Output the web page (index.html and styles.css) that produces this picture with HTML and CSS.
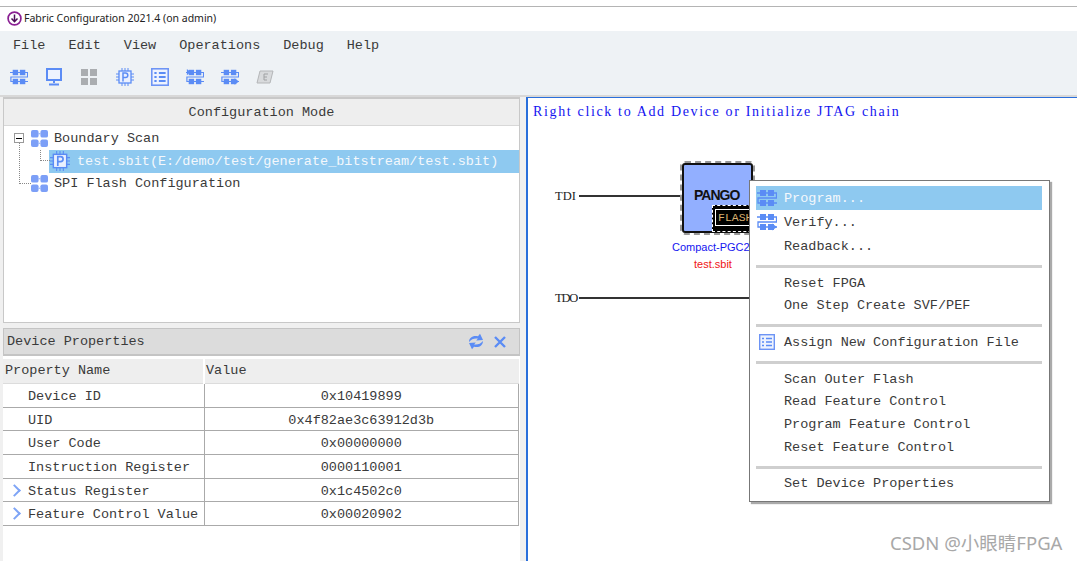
FILE: index.html
```html
<!DOCTYPE html>
<html lang="en">
<head>
<meta charset="utf-8">
<title>Fabric Configuration 2021.4</title>
<link rel="stylesheet" href="styles.css">
</head>
<body>
<svg class="defs" width="0" height="0">
  <defs>
    <symbol id="i-scan" viewBox="0 0 20 18">
      <g fill="#5b8cf5"><rect x="3" y="1" width="6" height="6"/><rect x="11" y="1" width="6" height="6"/><rect x="3" y="11" width="6" height="6"/><rect x="11" y="11" width="6" height="6"/></g>
      <path d="M0 4h19.500V9H1v5h19" stroke="#5b8cf5" fill="none" stroke-width="1.300"/>
    </symbol>
    <symbol id="i-tree" viewBox="0 0 20 18">
      <g fill="#7c9ff7"><rect x="1" y="0" width="8" height="8" rx="2"/><rect x="11" y="0" width="8" height="8" rx="2"/><rect x="1" y="10" width="8" height="8" rx="2"/><rect x="11" y="10" width="8" height="8" rx="2"/></g>
      <path d="M9 4h2M9 14h2" stroke="#7c9ff7"/>
    </symbol>
    <symbol id="i-chip" viewBox="0 0 18 18">
      <rect x="3" y="3" width="12" height="12" fill="#eaf0fe" stroke="#5b8cf5" stroke-width="1.300"/>
      <path d="M6 0v3M9 0v3M12 0v3M6 15v3M9 15v3M12 15v3M0 6h3M0 9h3M0 12h3M15 6h3M15 9h3M15 12h3" stroke="#5b8cf5"/>
      <path d="M7 13.500V5h2.500a2.300 2.300 0 0 1 0 4.600H7" fill="none" stroke="#5b8cf5" stroke-width="1.500"/>
    </symbol>
    <symbol id="i-list" viewBox="0 0 16 16">
      <rect x=".7" y=".7" width="14.600" height="14.600" fill="#eef3fe" stroke="#6d94f5" stroke-width="1.400"/>
      <path d="M3 4.500h2M3 8h2M3 11.500h2M7 4.500h6M7 8h6M7 11.500h6" stroke="#5b8cf5" stroke-width="1.700"/>
    </symbol>
  </defs>
</svg>
<div class="window">
  <header class="titlebar">
    <svg class="app-icon" width="15" height="15" viewBox="0 0 15 15"><circle cx="7.500" cy="7.500" r="6.400" fill="#fff" stroke="#8a1f93" stroke-width="1.700"/><path d="M7.500 3.500v7M4.500 7.500l3 3.200 3-3.200" fill="none" stroke="#4c0c58" stroke-width="1.500"/></svg>
    <span>Fabric Configuration 2021.4 (on admin)</span>
  </header>
  <nav class="menubar">
    <span class="menu-item">File</span>
    <span class="menu-item">Edit</span>
    <span class="menu-item">View</span>
    <span class="menu-item">Operations</span>
    <span class="menu-item">Debug</span>
    <span class="menu-item">Help</span>
  </nav>
  <div class="toolbar">
    <svg class="tool" viewBox="0 0 20 18"><use href="#i-scan"/></svg>
    <svg class="tool" viewBox="0 0 18 18"><rect x="2" y="1" width="14" height="11" fill="#eef3fe" stroke="#5b8cf5" stroke-width="2"/><path d="M9 12v3M4 16.500h10" stroke="#5b8cf5" stroke-width="2"/></svg>
    <svg class="tool" viewBox="0 0 18 18"><g fill="#aaadb0"><rect x="1" y="1" width="7" height="7"/><rect x="10" y="1" width="7" height="7"/><rect x="1" y="10" width="7" height="7"/><rect x="10" y="10" width="7" height="7"/></g></svg>
    <svg class="tool" viewBox="0 0 18 18"><use href="#i-chip"/></svg>
    <svg class="tool" viewBox="0 0 16 16"><use href="#i-list"/></svg>
    <svg class="tool" viewBox="0 0 20 18"><use href="#i-scan"/><path d="M1 0l4 3.500L1 7z" fill="#5b8cf5"/></svg>
    <svg class="tool" viewBox="0 0 20 18"><use href="#i-scan"/><path d="M15 10.500l5 3.500-5 3.500z" fill="#5b8cf5"/></svg>
    <svg class="tool" viewBox="0 0 18 18"><path d="M4 3h13l-3 12H1z" fill="#d8dadc" stroke="#b4b6b8"/><path d="M8 6h4M8 9h3M8 12h3M8 6v6" stroke="#a0a2a4"/></svg>
  </div>
  <main class="workspace">
    <section class="left">
      <div class="mode-panel">
        <div class="panel-head">Configuration Mode</div>
        <div class="tree">
          <span class="guide guide-root"></span>
          <span class="guide guide-child"></span>
          <span class="expander"></span>
          <div class="tree-row root-row">
            <svg class="tree-icon" viewBox="0 0 20 18"><use href="#i-tree"/></svg>
            <span>Boundary Scan</span>
          </div>
          <div class="tree-row child-row">
            <svg class="tree-icon-chip" viewBox="0 0 18 18"><use href="#i-chip"/></svg>
            <span>test.sbit(E:/demo/test/generate_bitstream/test.sbit)</span>
          </div>
          <div class="tree-row root-row">
            <svg class="tree-icon" viewBox="0 0 20 18"><use href="#i-tree"/></svg>
            <span>SPI Flash Configuration</span>
          </div>
        </div>
      </div>
      <div class="props-panel">
        <div class="props-head">
          <span>Device Properties</span>
          <div class="props-actions">
            <svg width="16" height="17" viewBox="0 0 16 17"><path d="M1 9C1 4.500 5 2 10 3.200L12 .8l3 6.200-6.800.6 1.700-2C6.500 5 3.500 6 1 9zM15 8c0 4.500-4 7-9 5.800L4 16.200 1 10l6.800-.6-1.700 2c3.400.6 6.400-.4 8.900-3.400z" fill="#5b8cf5"/></svg>
            <svg width="14" height="14" viewBox="0 0 14 14"><path d="M2 2l10 10M12 2 2 12" stroke="#5b8cf5" stroke-width="2.400"/></svg>
          </div>
        </div>
        <table class="props">
          <thead><tr><th class="col-name">Property Name</th><th>Value</th></tr></thead>
          <tbody>
            <tr><td class="name">Device ID</td><td>0x10419899</td></tr>
            <tr><td class="name">UID</td><td>0x4f82ae3c63912d3b</td></tr>
            <tr><td class="name">User Code</td><td>0x00000000</td></tr>
            <tr><td class="name">Instruction Register</td><td>0000110001</td></tr>
            <tr><td class="name has-arrow">Status Register</td><td>0x1c4502c0</td></tr>
            <tr><td class="name has-arrow">Feature Control Value</td><td>0x00020902</td></tr>
          </tbody>
        </table>
      </div>
    </section>
    <section class="canvas">
      <p class="hint">Right click to Add Device or Initialize JTAG chain</p>
      <span class="pin pin-tdi">TDI</span>
      <span class="wire wire-tdi"></span>
      <span class="pin pin-tdo">TDO</span>
      <span class="wire wire-tdo"></span>
      <div class="chip">
        <span class="chip-name">PANGO</span>
        <span class="flash"><span>FLASH</span></span>
      </div>
      <span class="dev-name">Compact-PGC2</span>
      <span class="dev-file">test.sbit</span>
      <div class="context-menu">
        <div class="cm-item tall active"><svg class="cm-icon" viewBox="0 0 20 18"><use href="#i-scan"/></svg>Program...</div>
        <div class="cm-item tall"><svg class="cm-icon" viewBox="0 0 20 18"><use href="#i-scan"/><path d="M15 10.500l5 3.500-5 3.500z" fill="#5b8cf5"/></svg>Verify...</div>
        <div class="cm-item first-plain">Readback...</div>
        <hr>
        <div class="cm-item">Reset FPGA</div>
        <div class="cm-item">One Step Create SVF/PEF</div>
        <hr>
        <div class="cm-item"><svg class="cm-icon cm-list" viewBox="0 0 16 16"><use href="#i-list"/></svg>Assign New Configuration File</div>
        <hr>
        <div class="cm-item">Scan Outer Flash</div>
        <div class="cm-item">Read Feature Control</div>
        <div class="cm-item">Program Feature Control</div>
        <div class="cm-item">Reset Feature Control</div>
        <hr>
        <div class="cm-item">Set Device Properties</div>
      </div>
      <span class="watermark">CSDN @小眼睛FPGA</span>
    </section>
  </main>
</div>
</body>
</html>
```
FILE: styles.css
```css
* { box-sizing: border-box; }
html, body { margin: 0; height: 561px; overflow: hidden; background: #fff; }
body { padding-top: 6px; font-family: "Liberation Mono", monospace; font-size: 13.5px; color: #3a3a3a; }
.defs { position: absolute; }
.window { height: 555px; display: flex; flex-direction: column; border-top: 1px solid #b4b4b4; }
.titlebar { height: 24px; flex: none; display: flex; align-items: center; gap: 2px; padding: 0 0 2px 7px; background: #fff; font-family: "Noto Sans", sans-serif; font-size: 10.500px; color: #222; }
.app-icon { flex: none; }
.menubar { height: 29px; flex: none; display: flex; align-items: center; padding-left: 13px; gap: 23px; background: #eef2f5; }
.toolbar { height: 35px; flex: none; display: flex; align-items: center; gap: 17.200px; padding: 0 0 1px 10px; background: #eef2f5; }
.tool { width: 18px; height: 18px; }
.workspace { flex: 1; min-height: 0; display: flex; background: #e4e4e4; border-top: 2px solid #d8d8d8; }
.left { width: 526px; flex: none; display: flex; flex-direction: column; padding: 0 6px 0 3px; background: #f0f0f0; }
.mode-panel { height: 226px; flex: none; display: flex; flex-direction: column; background: #fff; border: 1px solid #c8c8c8; border-top-width: 2px; }
.panel-head { height: 27px; flex: none; display: flex; align-items: center; justify-content: center; background: #eeeeee; border-bottom: 1px solid #d8d8d8; }
.tree { position: relative; padding: 1px 0 0 0; }
.tree-row { display: flex; align-items: center; height: 22.500px; }
.root-row { padding-left: 26px; gap: 5px; }
.tree-icon { width: 19px; height: 17px; flex: none; }
.child-row { margin-left: 45px; padding-left: 1px; height: 23px; gap: 7px; background: #8ec9f0; color: #f4f8fc; }
.tree-icon-chip { width: 20px; height: 20px; flex: none; }
.expander { position: absolute; left: 10px; top: 7px; width: 10px; height: 10px; border: 1px solid #999; background: linear-gradient(#000, #000) center / 6px 1px no-repeat #fff; z-index: 1; }
.guide { position: absolute; border-left: 1px dotted #888; border-bottom: 1px dotted #888; }
.guide-root { left: 15px; top: 12px; width: 12px; height: 46px; }
.guide-child { left: 36px; top: 24px; width: 10px; height: 11px; }
.props-panel { flex: 1; display: flex; flex-direction: column; margin-top: 5px; background: #fff; }
.props-head { height: 28px; flex: none; display: flex; align-items: center; justify-content: space-between; padding: 0 12px 0 3px; background: #dcdcdc; border: 1px solid #c4c4c4; border-bottom-width: 2px; }
.props-actions { display: flex; align-items: center; gap: 9px; }
.props { width: 516px; border-collapse: collapse; table-layout: fixed; }
.props th { height: 26px; padding: 0 0 2px 1px; font-weight: normal; text-align: left; background: #eeeeee; border-bottom: 1px solid #dcdcdc; border-top: 3px solid #fff; }
.props .col-name { width: 201px; padding-left: 2px; border-right: 2px solid #fff; }
.props td { height: 23.700px; padding: 2px 0 0; text-align: center; border-bottom: 1px solid #aaa; border-right: 1px solid #aaa; }
.props td.name { text-align: left; padding-left: 25px; position: relative; }
.has-arrow::before { content: ""; position: absolute; left: 7px; top: 7px; width: 7px; height: 7px; transform: rotate(45deg); border-top: 2px solid #7ea4f6; border-right: 2px solid #7ea4f6; }
.canvas { flex: 1; position: relative; background: #fff; border-left: 2px solid #2a6fdb; border-top: 1px solid #2a6fdb; }
.hint { margin: 0; position: absolute; left: 5px; top: 6px; font-family: "Liberation Serif", serif; font-size: 14px; letter-spacing: 1.650px; color: #1414f0; white-space: nowrap; }
.pin { position: absolute; font-family: "Liberation Serif", serif; font-size: 12.500px; color: #222; }
.pin-tdi { left: 27px; top: 91px; }
.pin-tdo { left: 27px; top: 193px; letter-spacing: -1.200px; }
.wire { position: absolute; left: 51px; height: 1.500px; background: #333; }
.wire-tdi { top: 97px; width: 104px; }
.wire-tdo { top: 199px; width: 172px; }
.chip { position: absolute; left: 154px; top: 65px; width: 71px; height: 70px; background: #92afff; border: 2px solid #111; border-radius: 3px; outline: 2px dashed #999; outline-offset: 0; }
.chip-name { position: absolute; left: 10px; top: 22px; font-family: "Liberation Sans", sans-serif; font-weight: bold; font-size: 14px; letter-spacing: -1px; color: #111; }
.flash { position: absolute; left: 28px; top: 40px; width: 50px; height: 27px; overflow: hidden; background: #000; border: 1px dashed #fff; padding: 3px 0 0 2px; }
.flash span { display: block; border: 1px solid #fff; padding-left: 2px; width: 60px; height: 17px; font-size: 11.500px; line-height: 15px; color: #d8b070; }
.dev-name, .dev-file { position: absolute; font-family: "Liberation Sans", sans-serif; font-size: 11px; white-space: nowrap; }
.dev-name { left: 144px; top: 143px; color: #1414f0; }
.dev-file { left: 166px; top: 160px; color: #f01414; }
.context-menu { position: absolute; left: 221px; top: 82px; width: 301px; height: 322px; padding: 5px 7px 0 6px; background: #fff; border: 1px solid #777; box-shadow: 2px 2px 1px #aaa; }
.cm-item { position: relative; height: 22.700px; padding-left: 28px; display: flex; align-items: center; }
.cm-item.tall { height: 24px; }
.cm-item.first-plain { margin-top: 1px; }
.cm-item.active { background: #8ec9f0; color: #f4f8fc; }
.cm-icon { position: absolute; left: 1px; top: 3px; width: 20px; height: 18px; }
.cm-list { left: 3px; width: 16px; height: 16px; top: 3px; }
.context-menu hr { height: 3px; margin: 7px 0 4px; border: 0; background: #cfcfcf; }
.watermark { position: absolute; left: 362px; top: 431px; font-family: "Noto Sans", "Noto Sans CJK SC", sans-serif; font-size: 18.500px; color: #a8a8a8; white-space: nowrap; }
```
